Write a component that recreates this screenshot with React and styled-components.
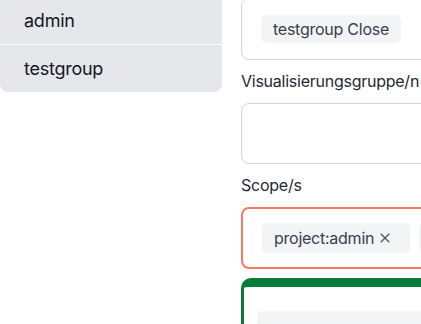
import React from "react";
import styled, { createGlobalStyle } from "styled-components";
import { X } from "lucide-react";

const Global = createGlobalStyle`
  html, body {
    margin: 0;
    padding: 0;
    background: #ffffff;
    overflow: hidden;
  }
  body {
    font-family: Inter, "Liberation Sans", sans-serif;
    letter-spacing: -0.25px;
    color: #1f2937;
  }
`;

const Page = styled.div`
  display: grid;
  grid-template-columns: 222px 1fr;
  column-gap: 19px;
  align-items: start;
  margin-top: -3px;
  width: 460px;
`;

const GroupList = styled.ul`
  list-style: none;
  margin: 0;
  padding: 0;
  background: #e5e7eb;
  border-radius: 0 0 8px 8px;
`;

const GroupItem = styled.li`
  height: 47px;
  display: flex;
  align-items: center;
  padding: 0 24px;
  font-size: 18px;
  color: #111827;
  & + & {
    border-top: 1px solid #f9fafb;
  }
`;

const Form = styled.div`
  display: flex;
  flex-direction: column;
  padding-top: 1px;
`;

const Label = styled.div`
  font-size: 16px;
  line-height: 24px;
  color: #1f2937;
  margin: 9px 0 10px;
`;

const Field = styled.div`
  display: flex;
  gap: 9px;
  align-items: center;
  min-height: ${(p) => p.$min || 0}px;
  padding: ${(p) => (p.$invalid ? "14px 19px" : "16px 19px")};
  border: ${(p) => (p.$invalid ? "2px solid #f97a5c" : "1px solid #d1d5db")};
  border-radius: 8px;
  white-space: nowrap;
  box-sizing: border-box;
`;

const FocusField = styled.div`
  margin-top: 9px;
  height: 60px;
  border: 3px solid #077d35;
  border-top-width: 9px;
  border-right: none;
  border-bottom: none;
  border-radius: 10px 0 0 0;
  padding: 24px 0 0 13px;
`;

const Chip = styled.span`
  display: inline-flex;
  align-items: center;
  gap: 3px;
  height: ${(p) => p.$h || 28}px;
  padding: 0 ${(p) => (p.$removable ? 17 : 12)}px 0 12px;
  background: #f3f4f6;
  border-radius: 5px;
  font-size: 16px;
  color: #374151;
  flex-shrink: 0;
  svg {
    color: #4b5563;
  }
`;

const GhostChip = styled(Chip)`
  width: 180px;
  height: 30px;
  padding: 0;
`;

export default function App() {
  return (
    <>
      <Global />
      <Page>
        <GroupList>
          <GroupItem>admin</GroupItem>
          <GroupItem>testgroup</GroupItem>
        </GroupList>

        <Form>
          <Field>
            <Chip>testgroup Close</Chip>
          </Field>

          <Label>Visualisierungsgruppe/n</Label>
          <Field $min={61} />

          <Label>Scope/s</Label>
          <Field $invalid>
            <Chip $h={30} $removable>
              project:admin
              <X size={16} strokeWidth={1.75} />
            </Chip>
            <Chip $h={30}>project:testgroup</Chip>
          </Field>

          <FocusField>
            <GhostChip />
          </FocusField>
        </Form>
      </Page>
    </>
  );
}
